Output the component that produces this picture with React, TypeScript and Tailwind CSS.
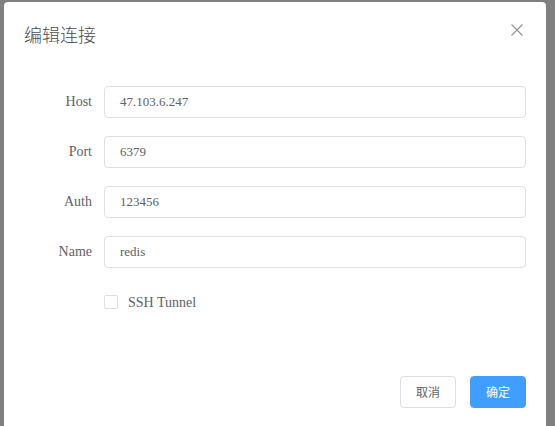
const fields = [
  { label: "Host", value: "47.103.6.247" },
  { label: "Port", value: "6379" },
  { label: "Auth", value: "123456" },
  { label: "Name", value: "redis" },
];

const serif = "font-['Liberation_Serif','Times_New_Roman',serif]";
const cjk = "font-['Noto_Sans_CJK_SC','Noto_Sans',sans-serif]";

export default function App() {
  return (
    <div className="w-[555px] h-[426px] overflow-hidden bg-[#808080] pl-[4px] pt-[2px]">
      <div className="w-[542px] h-[460px] bg-white rounded-t-[4px]">
        {/* header */}
        <div className="flex items-start justify-between px-[20px] pt-[20px] pb-[10px]">
          <span className={`${cjk} text-[18px] leading-[24px] font-light text-[#4d4d4d]`}>
            编辑连接
          </span>
          <button className="mt-[2px] mr-[3px] text-[#909399]">
            <svg width="12" height="12" viewBox="0 0 12 12" fill="none" stroke="currentColor" strokeWidth="1.1">
              <path d="M0.5 0.5L11.5 11.5M11.5 0.5L0.5 11.5" />
            </svg>
          </button>
        </div>

        {/* body */}
        <div className="px-[20px] py-[30px]">
          {fields.map((f) => (
            <div key={f.label} className="flex mb-[18px]">
              <label className={`${serif} w-[80px] pr-[12px] text-right text-[14px] leading-[32px] text-[#606266]`}>
                {f.label}
              </label>
              <div className="flex-1 h-[32px] border border-[#dcdfe6] rounded-[4px] px-[15px] flex items-center">
                <span className={`${serif} text-[13px] text-[#606266]`}>{f.value}</span>
              </div>
            </div>
          ))}
          <div className="flex mb-[18px] h-[32px] items-center pl-[80px]">
            <span className="w-[14px] h-[14px] border border-[#dcdfe6] rounded-[2px] bg-white" />
            <span className={`${serif} ml-[10px] text-[14px] text-[#606266]`}>SSH Tunnel</span>
          </div>
        </div>

        {/* footer */}
        <div className="flex justify-end gap-[14px] px-[20px] pt-[10px] pb-[20px]">
          <button className={`${cjk} w-[56px] h-[32px] border border-[#dcdfe6] rounded-[4px] bg-white text-[12px] text-[#606266]`}>
            取消
          </button>
          <button className={`${cjk} w-[56px] h-[32px] border border-[#409eff] rounded-[4px] bg-[#409eff] text-[12px] text-white`}>
            确定
          </button>
        </div>
      </div>
    </div>
  );
}
